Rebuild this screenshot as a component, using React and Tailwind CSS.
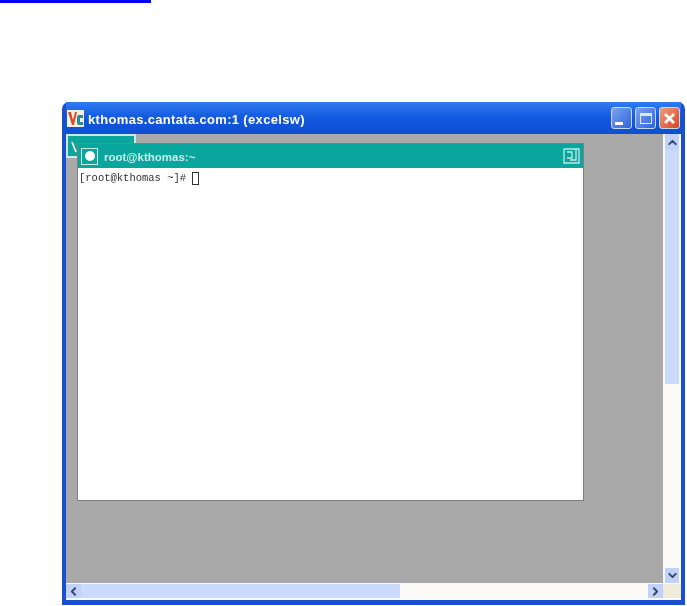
import React from 'react';
import { ChevronUp, ChevronDown, ChevronLeft, ChevronRight } from 'lucide-react';

const WindowButton = ({ className = '', children }) => (
  <div className={`w-[21px] h-[22px] rounded-[3px] border border-[#c9d8f8] flex items-center justify-center ${className}`}>
    {children}
  </div>
);

const ScrollArrow = ({ Icon, className = '' }) => (
  <div className={`flex items-center justify-center bg-[#c0d2f8] ${className}`}>
    <Icon size={13} strokeWidth={3.5} color="#3a4566" />
  </div>
);

const App = () => {
  return (
    <div className="w-[687px] h-[606px] bg-white overflow-hidden" style={{ fontFamily: '"Liberation Sans", Arial, sans-serif' }}>
      <div className="w-[151px] h-[3px] bg-[#0000ff]" />

      {/* outer VNC window */}
      <div className="ml-[62px] mt-[99px] w-[623px] h-[503px] bg-[#1a4fd0] rounded-t-[7px] pl-[4px] pr-[4px] pb-[5px] flex flex-col blur-[0.6px]">
        <div className="h-[32px] shrink-0 flex items-center justify-between pr-[1px] bg-gradient-to-b from-[#2f7cf0] via-[#1158de] to-[#0e4fd2]">
          <div className="flex items-center gap-[4px] pl-[1px]">
            <svg width="17" height="17" viewBox="0 0 17 17">
              <rect width="17" height="17" fill="#f2efe6" />
              <path d="M1 2 L4 2 L6 10 L8 2 L10 2 L7 15 L5 15 Z" fill="#d8502a" />
              <path d="M16 5 L12 5 Q10 5 10 7 L10 13 Q10 15 12 15 L16 15 L16 12 L13 12 L13 8 L16 8 Z" fill="#2a8a9a" />
            </svg>
            <span className="text-[13px] font-bold text-white leading-none tracking-[0.33px] pt-[2px]">kthomas.cantata.com:1 (excelsw)</span>
          </div>
          <div className="flex items-center gap-[3px]">
            <WindowButton className="bg-gradient-to-br from-[#7ea3ef] to-[#2c62dc]">
              <div className="w-[8px] h-[3px] bg-white mt-[10px] mr-[5px]" />
            </WindowButton>
            <WindowButton className="bg-gradient-to-br from-[#7ea3ef] to-[#2c62dc]">
              <div className="w-[12px] h-[11px] border border-[#dfe8fb] border-t-[3px]" />
            </WindowButton>
            <WindowButton className="bg-gradient-to-br from-[#ee9a7c] to-[#d9431c]">
              <svg width="13" height="13" viewBox="0 0 13 13">
                <path d="M2 2 L11 11 M11 2 L2 11" stroke="#fff" strokeWidth="2.8" />
              </svg>
            </WindowButton>
          </div>
        </div>

        <div className="flex-1 min-h-0 flex flex-col">
          <div className="flex-1 min-h-0 flex">
            {/* desktop area */}
            <div className="relative flex-1 bg-[#a9a9a9] pl-[11px] pt-[9px]">
              <div className="absolute left-0 top-0 w-[70px] h-[24px] bg-[#0aa59c] border-2 border-[#c5ece8] overflow-hidden">
                <svg width="10" height="12" viewBox="0 0 10 12" className="ml-[3px] mt-[6px]">
                  <path d="M1 0 L5 10" stroke="#fff" strokeWidth="1.6" />
                </svg>
              </div>

              {/* terminal window */}
              <div className="relative w-[507px] h-[358px] bg-white border border-[#7f7f7f] flex flex-col">
                <div className="h-[24px] shrink-0 bg-[#0aa59c] flex items-center justify-between pl-[3px] pr-[3px]">
                  <div className="flex items-center gap-[6px]">
                    <div className="w-[17px] h-[17px] border border-[#c5ece8] flex items-center justify-center">
                      <div className="w-[10px] h-[10px] rounded-full bg-white" />
                    </div>
                    <span className="text-[11.5px] font-bold text-[#c8eeea] leading-none pt-[3px]">root@kthomas:~</span>
                  </div>
                  <svg width="17" height="16" viewBox="0 0 17 16" fill="none" stroke="#bfeae6" strokeWidth="1.3">
                    <path d="M1 1 H16 V15 H1 Z M4 4 H9 V10 H4 M13 1 V12 H7" />
                  </svg>
                </div>
                <div className="flex items-center pl-[1px] pt-[3px] text-[10.5px] font-medium text-[#333333] leading-[14px]" style={{ fontFamily: '"Liberation Mono", monospace' }}>
                  <span>[root@kthomas ~]#</span>
                  <div className="ml-[6px] w-[7px] h-[13px] border border-[#333333]" />
                </div>
              </div>
            </div>

            {/* vertical scrollbar */}
            <div className="w-[18px] shrink-0 flex flex-col bg-[#fbfaf6] px-[2px]">
              <ScrollArrow Icon={ChevronUp} className="h-[16px] shrink-0" />
              <div className="h-[234px] shrink-0 bg-[#cbdafa]" />
              <div className="flex-1" />
              <ScrollArrow Icon={ChevronDown} className="h-[15px] shrink-0" />
            </div>
          </div>

          {/* horizontal scrollbar */}
          <div className="h-[17px] shrink-0 flex bg-[#fbfaf6] pt-[1px] pb-[2px]">
            <ScrollArrow Icon={ChevronLeft} className="w-[15px] shrink-0" />
            <div className="w-[319px] shrink-0 bg-[#cbdafa]" />
            <div className="flex-1" />
            <ScrollArrow Icon={ChevronRight} className="w-[15px] shrink-0" />
            <div className="w-[18px] shrink-0 bg-[#f0ecdc]" />
          </div>
        </div>
      </div>
    </div>
  );
};

export default App;
